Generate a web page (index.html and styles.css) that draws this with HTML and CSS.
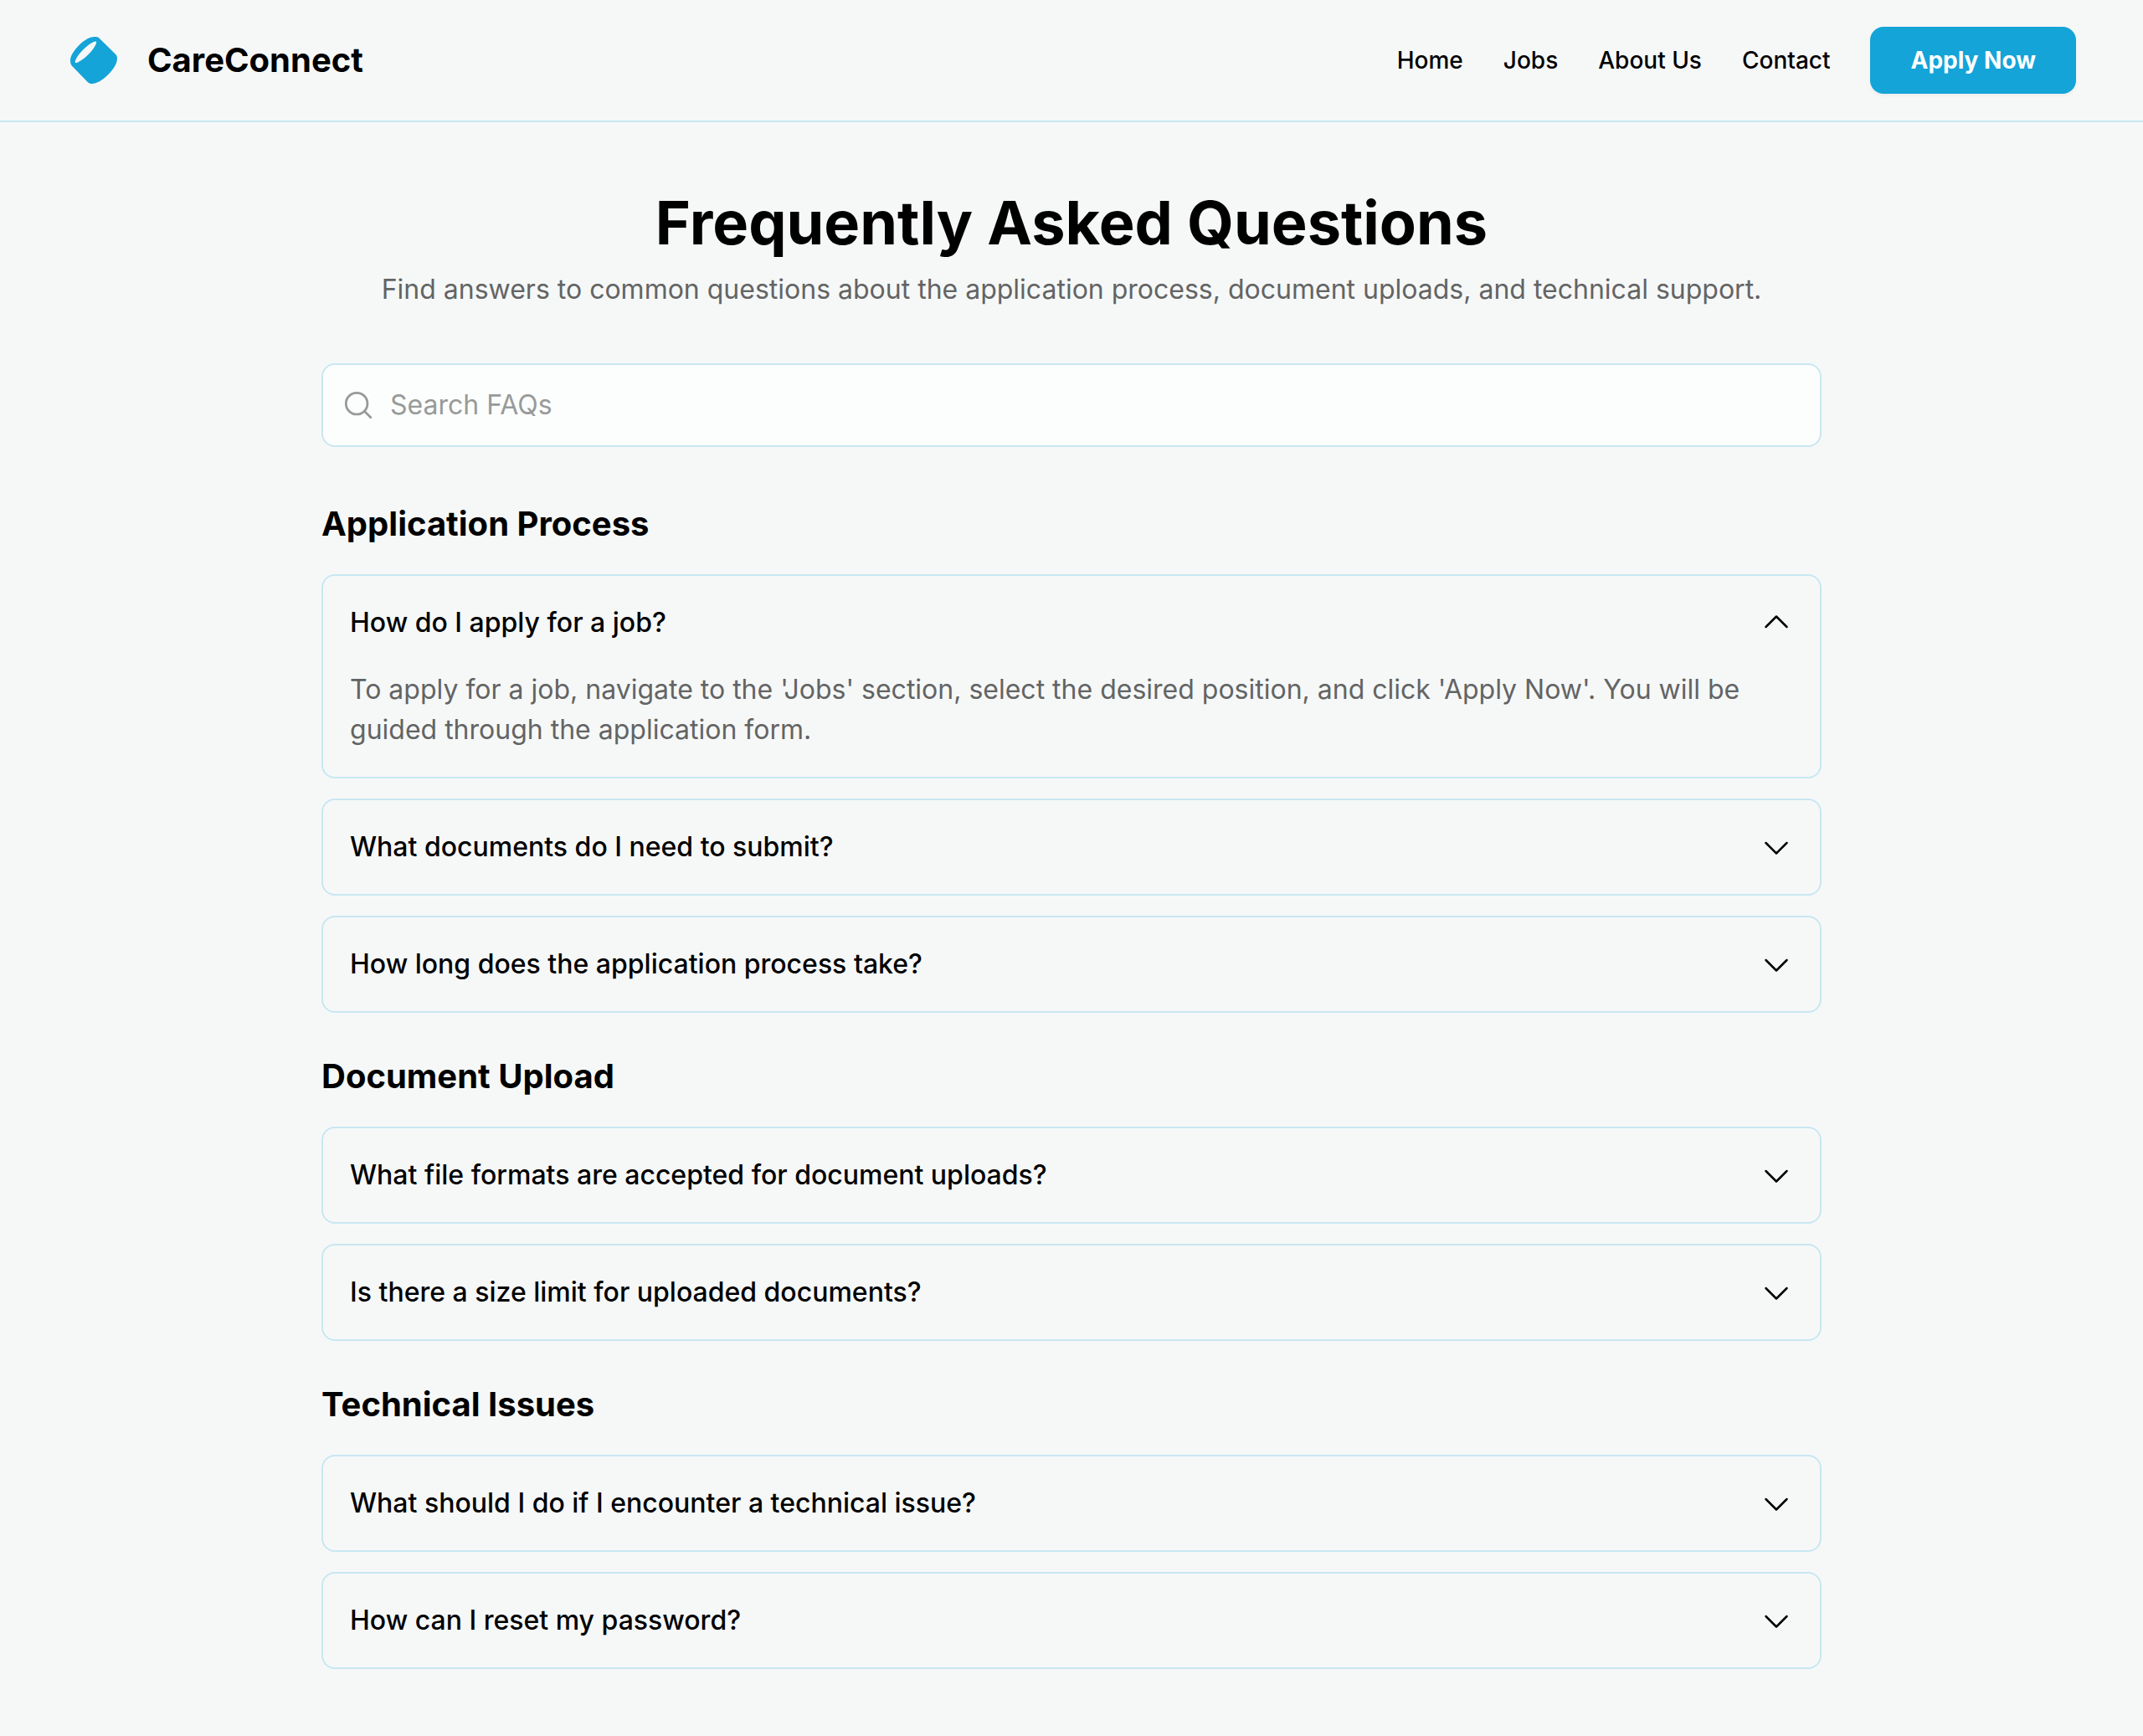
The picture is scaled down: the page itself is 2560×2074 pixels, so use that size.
FILE: index.html
```html
<!DOCTYPE html>
<html lang="en">
<head>
  <meta charset="utf-8">
  <meta name="viewport" content="width=device-width, initial-scale=1">
  <title>CareConnect – Frequently Asked Questions</title>
  <link rel="stylesheet" href="styles.css">
</head>
<body>
  <svg class="sprite" aria-hidden="true">
    <symbol id="caret-down" viewBox="0 0 256 256">
      <polyline points="208 96 128 176 48 96" fill="none" stroke="currentColor" stroke-width="16" stroke-linecap="round" stroke-linejoin="round"/>
    </symbol>
  </svg>

  <header class="site-header">
    <a class="brand" href="#">
      <svg class="brand-mark" viewBox="60 60 192 192" aria-hidden="true">
        <path fill="currentColor" fill-rule="evenodd" d="M78 176 C73 171 72 164 72 154 C72 142 84 121 104 101 C125 81 144 72 158 72 C167 72 172 73 176 77 L234 134 C239 139 240 143 240 150 C240 166 228 187 208 207 C187 228 166 240 150 240 C143 240 139 239 134 234 Z M90 165 C94 168 115 157 136 136 C157 115 168 94 165 89 C161 85 141 95 119 117 C97 139 86 160 90 165 Z"/>
      </svg>
      <span class="brand-name">CareConnect</span>
    </a>
    <nav class="site-nav" aria-label="Main">
      <a class="nav-link" href="#">Home</a>
      <a class="nav-link" href="#">Jobs</a>
      <a class="nav-link" href="#">About Us</a>
      <a class="nav-link" href="#">Contact</a>
      <button class="apply-button" type="button">Apply Now</button>
    </nav>
  </header>

  <main class="page">
    <div class="intro">
      <h1 class="page-title">Frequently Asked Questions</h1>
      <p class="page-subtitle">Find answers to common questions about the application process, document uploads, and technical support.</p>
    </div>

    <label class="search">
      <svg class="icon" viewBox="0 0 256 256" fill="none" stroke="currentColor" stroke-width="18" stroke-linecap="round" role="img" aria-label="Search FAQs">
        <circle cx="116" cy="116" r="82"/>
        <line x1="175" y1="175" x2="223" y2="223"/>
      </svg>
      <input class="search-input" type="search" placeholder="Search FAQs">
    </label>

    <section class="faq-section">
      <h2 class="section-title">Application Process</h2>
      <div class="faq-list">
        <details class="faq" open>
          <summary class="question">How do I apply for a job?<svg class="icon caret" aria-hidden="true"><use href="#caret-down"/></svg></summary>
          <p class="answer">To apply for a job, navigate to the 'Jobs' section, select the desired position, and click 'Apply Now'. You will be guided through the application form.</p>
        </details>
        <details class="faq">
          <summary class="question">What documents do I need to submit?<svg class="icon caret" aria-hidden="true"><use href="#caret-down"/></svg></summary>
        </details>
        <details class="faq">
          <summary class="question">How long does the application process take?<svg class="icon caret" aria-hidden="true"><use href="#caret-down"/></svg></summary>
        </details>
      </div>
    </section>

    <section class="faq-section">
      <h2 class="section-title">Document Upload</h2>
      <div class="faq-list">
        <details class="faq">
          <summary class="question">What file formats are accepted for document uploads?<svg class="icon caret" aria-hidden="true"><use href="#caret-down"/></svg></summary>
        </details>
        <details class="faq">
          <summary class="question">Is there a size limit for uploaded documents?<svg class="icon caret" aria-hidden="true"><use href="#caret-down"/></svg></summary>
        </details>
      </div>
    </section>

    <section class="faq-section">
      <h2 class="section-title">Technical Issues</h2>
      <div class="faq-list">
        <details class="faq">
          <summary class="question">What should I do if I encounter a technical issue?<svg class="icon caret" aria-hidden="true"><use href="#caret-down"/></svg></summary>
        </details>
        <details class="faq">
          <summary class="question">How can I reset my password?<svg class="icon caret" aria-hidden="true"><use href="#caret-down"/></svg></summary>
        </details>
      </div>
    </section>
  </main>
</body>
</html>
```
FILE: styles.css
```css
:root {
  --primary: #14a4d8;
  --background: #f6f8f8;
  --line: #c8e7f1;
  --muted: #636464;
  --placeholder: #989a99;
}

* {
  box-sizing: border-box;
}

body {
  margin: 0;
  background: var(--background);
  color: #000;
  font-family: Inter, "Liberation Sans", sans-serif;
  font-size: 32px;
  line-height: 48px;
}

h1,
h2,
p {
  margin: 0;
}

a {
  color: inherit;
  text-decoration: none;
}

.sprite {
  display: none;
}

.icon {
  flex: none;
  width: 40px;
  height: 40px;
}

.site-header {
  display: flex;
  flex-wrap: wrap;
  align-items: center;
  justify-content: space-between;
  gap: 32px;
  padding: 32px 80px;
  border-bottom: 2px solid var(--line);
}

.brand {
  display: flex;
  align-items: center;
  gap: 32px;
}

.brand-mark {
  width: 64px;
  height: 64px;
  color: var(--primary);
}

.brand-name {
  font-size: 40px;
  font-weight: 700;
}

.site-nav {
  display: flex;
  flex-wrap: wrap;
  align-items: center;
  gap: 48px;
}

.nav-link {
  font-size: 28px;
  font-weight: 500;
}

.apply-button {
  padding: 16px 48px;
  border: 0;
  border-radius: 16px;
  background: var(--primary);
  box-shadow: 0 2px 4px rgb(0 0 0 / 5%);
  color: #fff;
  font: inherit;
  font-size: 28px;
  font-weight: 700;
  cursor: pointer;
}

.page {
  max-width: 1792px;
  margin: 0 auto;
  padding: 80px 0;
}

.intro {
  display: grid;
  gap: 16px;
  margin-bottom: 64px;
  text-align: center;
}

.page-title {
  font-size: 72px;
  font-weight: 700;
  line-height: 80px;
}

.page-subtitle {
  color: var(--muted);
}

.search {
  display: flex;
  align-items: center;
  gap: 18px;
  margin-bottom: 64px;
  padding: 24px 22px;
  border: 2px solid var(--line);
  border-radius: 16px;
  background: #fcfefd;
  color: var(--placeholder);
}

.search-input {
  flex: 1;
  min-width: 0;
  height: 48px;
  padding: 0;
  border: 0;
  outline: 0;
  background: none;
  color: #000;
  font: inherit;
}

.search-input::placeholder {
  color: var(--placeholder);
  opacity: 1;
}

.faq-section + .faq-section {
  margin-top: 48px;
}

.section-title {
  margin-bottom: 32px;
  font-size: 40px;
  font-weight: 700;
  line-height: 56px;
}

.faq-list {
  display: grid;
  gap: 24px;
}

.faq {
  border: 2px solid var(--line);
  border-radius: 16px;
}

.question {
  display: flex;
  align-items: center;
  justify-content: space-between;
  gap: 32px;
  padding: 32px;
  font-weight: 500;
  list-style: none;
  cursor: pointer;
}

.faq[open] .caret {
  transform: rotate(180deg);
}

.answer {
  padding: 0 32px 32px;
  color: var(--muted);
}
```
